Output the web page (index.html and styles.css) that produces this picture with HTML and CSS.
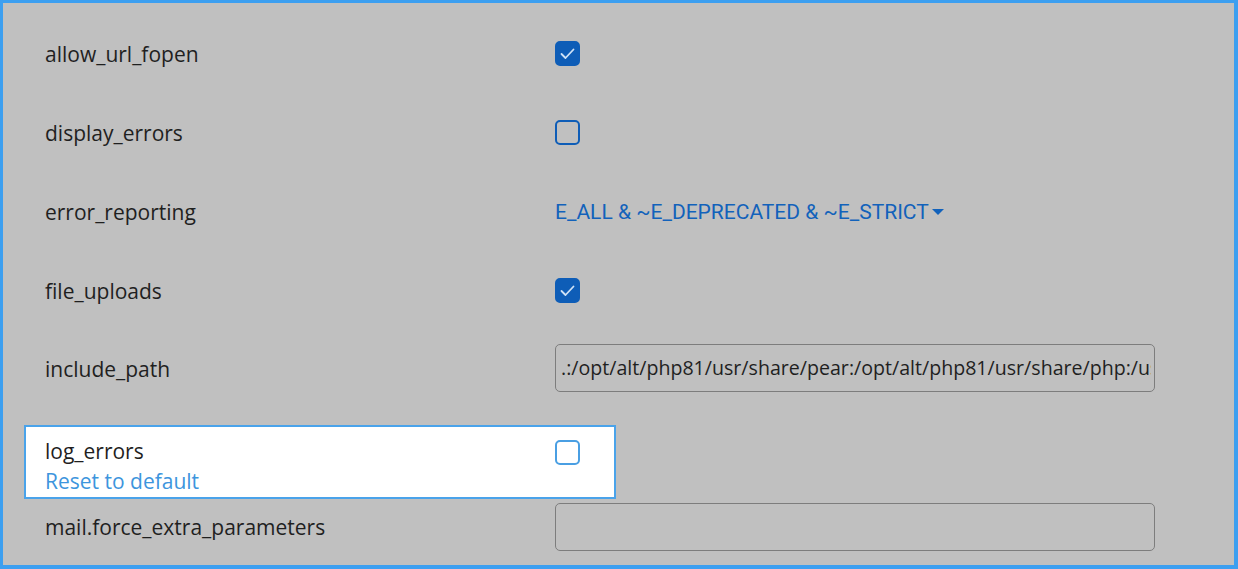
FILE: index.html
```html
<!DOCTYPE html>
<html>
<head>
<meta charset="utf-8">
<link rel="stylesheet" href="styles.css">
</head>
<body>
<div class="frame">
  <div class="list">
    <div class="row">
      <div class="label">allow_url_fopen</div>
      <div class="control"><span class="cb checked"><svg viewBox="0 0 25 25"><path d="M6.5 13 L10.5 17 L18.5 8.5"/></svg></span></div>
    </div>
    <div class="row">
      <div class="label">display_errors</div>
      <div class="control"><span class="cb"></span></div>
    </div>
    <div class="row">
      <div class="label">error_reporting</div>
      <div class="control"><span class="dropdown">E_ALL &amp; ~E_DEPRECATED &amp; ~E_STRICT<span class="caret"></span></span></div>
    </div>
    <div class="row">
      <div class="label">file_uploads</div>
      <div class="control"><span class="cb checked"><svg viewBox="0 0 25 25"><path d="M6.5 13 L10.5 17 L18.5 8.5"/></svg></span></div>
    </div>
    <div class="row path">
      <div class="label">include_path</div>
      <div class="control"><input class="text" type="text" value=".:/opt/alt/php81/usr/share/pear:/opt/alt/php81/usr/share/php:/usr/share/pear:/usr/share/php"></div>
    </div>
    <div class="row active">
      <div class="label">log_errors<a class="reset">Reset to default</a></div>
      <div class="control"><span class="cb light"></span></div>
    </div>
    <div class="row last">
      <div class="label">mail.force_extra_parameters</div>
      <div class="control"><input class="text" type="text" value=""></div>
    </div>
  </div>
</div>
</body>
</html>
```

FILE: styles.css
```css
* { box-sizing: border-box; }
html, body { margin: 0; padding: 0; }
body {
  font-family: "Open Sans", "Noto Sans", sans-serif;
  color: #1f1f1f;
}
.frame {
  width: 1238px;
  height: 569px;
  background: #c0c0c0;
  border-style: solid;
  border-color: #3c9ff0;
  border-width: 3px 4px 4px 3px;
  overflow: hidden;
}
.list {
  padding: 11px 0 0 21px;
}
.row {
  width: 592px;
  height: 79px;
  display: grid;
  grid-template-columns: 510px 1fr;
  align-items: center;
  padding: 0 19px;
  border: 2px solid transparent;
  font-size: 21px;
}
.label {
  display: flex;
  flex-direction: column;
  line-height: 30px;
  white-space: nowrap;
}
.control {
  display: flex;
  align-items: center;
}
.cb {
  width: 25px;
  height: 25px;
  border: 2.5px solid #0e5db7;
  border-radius: 5px;
  display: block;
}
.cb.checked {
  background: #0e5db7;
  border-color: #0e5db7;
  position: relative;
}
.cb svg {
  position: absolute;
  left: -2.5px;
  top: -2.5px;
  width: 25px;
  height: 25px;
}
.cb svg path {
  fill: none;
  stroke: #cfe2f6;
  stroke-width: 1.8;
  stroke-linecap: round;
  stroke-linejoin: round;
}
.cb.light {
  border-color: #4a9fe3;
  background: #fff;
}
.dropdown {
  font-family: Roboto, "Noto Sans", sans-serif;
  font-size: 21px;
  color: #1262bb;
  display: inline-flex;
  align-items: center;
  white-space: nowrap;
}
.caret {
  display: inline-block;
  width: 0;
  height: 0;
  margin-left: 3px;
  border-left: 6px solid transparent;
  border-right: 6px solid transparent;
  border-top: 6px solid #1262bb;
}
.text {
  width: 600px;
  height: 48px;
  flex: none;
  border: 1px solid #7d7d7d;
  border-radius: 5px;
  background: transparent;
  font-family: "Open Sans", "Noto Sans", sans-serif;
  font-size: 19.6px;
  color: #1f1f1f;
  padding: 0 3px 0 5px;
  outline: none;
}
.row.path {
  margin-top: -2px;
}
.row.path .label { padding-top: 2px; }
.row.active {
  height: 74px;
  margin-top: 18px;
  background: #fff;
  border-color: #4aa3ea;
  align-items: start;
  padding-top: 9px;
}
.row.active .control { padding-top: 4px; }
.reset {
  color: #3d95dd;
  cursor: pointer;
}
.row.last {
  height: 48px;
  margin-top: 2px;
}
```
